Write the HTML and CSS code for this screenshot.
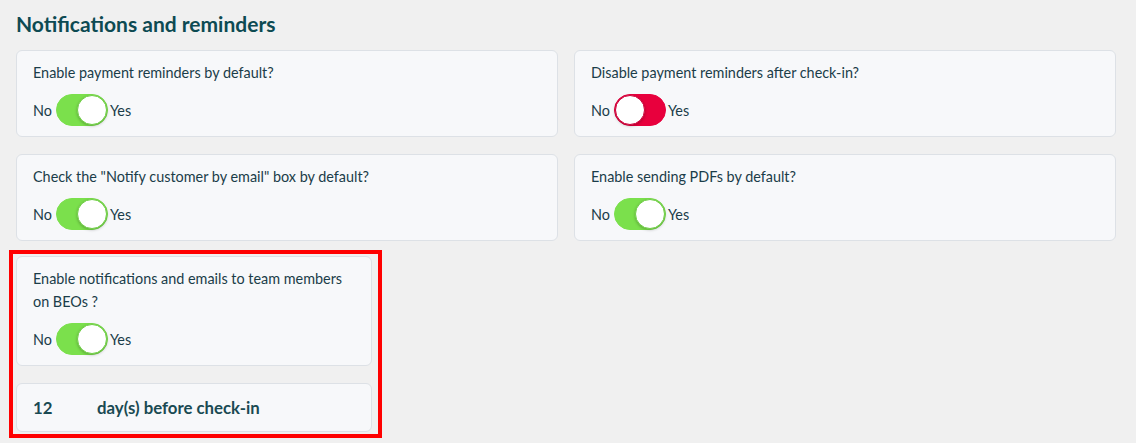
FILE: index.html
```html
<!DOCTYPE html>
<html lang="en">
<head>
<meta charset="utf-8">
<title>Notifications and reminders</title>
<link rel="stylesheet" href="styles.css">
</head>
<body>
<section class="section">
  <h2 class="title">Notifications and reminders</h2>
  <div class="grid-2">
    <div class="card">
      <div class="label">Enable payment reminders by default?</div>
      <div class="switch-row"><span>No</span><span class="switch on"><span class="knob"></span></span><span>Yes</span></div>
    </div>
    <div class="card">
      <div class="label">Disable payment reminders after check-in?</div>
      <div class="switch-row"><span>No</span><span class="switch off"><span class="knob"></span></span><span>Yes</span></div>
    </div>
    <div class="card">
      <div class="label">Check the "Notify customer by email" box by default?</div>
      <div class="switch-row"><span>No</span><span class="switch on"><span class="knob"></span></span><span>Yes</span></div>
    </div>
    <div class="card">
      <div class="label">Enable sending PDFs by default?</div>
      <div class="switch-row"><span>No</span><span class="switch on"><span class="knob"></span></span><span>Yes</span></div>
    </div>
  </div>
  <div class="grid-3">
    <div class="stack">
      <div class="card">
        <div class="label">Enable notifications and emails to team members on BEOs ?</div>
        <div class="switch-row"><span>No</span><span class="switch on"><span class="knob"></span></span><span>Yes</span></div>
      </div>
      <div class="card days">
        <span class="days-num">12</span>
        <span>day(s) before check-in</span>
      </div>
      <div class="highlight"></div>
    </div>
  </div>
</section>
</body>
</html>
```

FILE: styles.css
```css
* { box-sizing: border-box; }
html, body { margin: 0; padding: 0; }
body {
  background: #f0f0f0;
  font-family: Lato, "Open Sans", sans-serif;
  color: #1b3d49;
  font-size: 14.4px;
  min-height: 443px;
}
.section {
  padding: 10px 20px 0 16px;
}
.title {
  margin: 0 0 12px 0;
  font-size: 21px;
  line-height: 28px;
  font-weight: 700;
  color: #0d4a52;
}
.grid-2 {
  display: grid;
  grid-template-columns: 1fr 1fr;
  gap: 17px 16px;
}
.grid-3 {
  display: grid;
  grid-template-columns: repeat(3, 1fr);
  gap: 16px;
  margin-top: 15px;
}
.stack {
  position: relative;
  display: flex;
  flex-direction: column;
  gap: 17px;
}
.card {
  background: #f7f8fa;
  border: 1px solid #dde1e6;
  border-radius: 6px;
  padding: 10px 16px 10px 16px;
}
.label {
  line-height: 23px;
  margin-bottom: 10px;
}
.switch-row {
  display: flex;
  align-items: center;
  height: 32px;
}
.switch-row > span:first-child { margin-right: 4px; }
.switch-row > span:last-child { margin-left: 2px; }
.switch {
  position: relative;
  display: inline-block;
  width: 52px;
  height: 32px;
  border-radius: 16px;
  border: 1px solid;
}
.switch.on { background: #7be04c; border-color: #7be04c; }
.switch.off { background: #e8003d; border-color: #e8003d; }
.knob {
  position: absolute;
  top: 0;
  width: 30px;
  height: 30px;
  border-radius: 50%;
  background: #fff;
  box-shadow: 0 1px 3px rgba(0,0,0,0.25);
}
.switch.on .knob { right: 0; border: 1px solid #6fcf45; }
.switch.off .knob { left: 0; border: 1px solid #d0003a; }
.days {
  display: flex;
  align-items: center;
  height: 49px;
  padding: 0 16px;
  font-size: 16.8px;
  font-weight: 700;
  color: #1a4a52;
}
.days-num { width: 64px; }
.highlight {
  position: absolute;
  left: -7px;
  right: -10px;
  top: -6px;
  bottom: -6px;
  border: 4px solid #ff0000;
  pointer-events: none;
}
```
